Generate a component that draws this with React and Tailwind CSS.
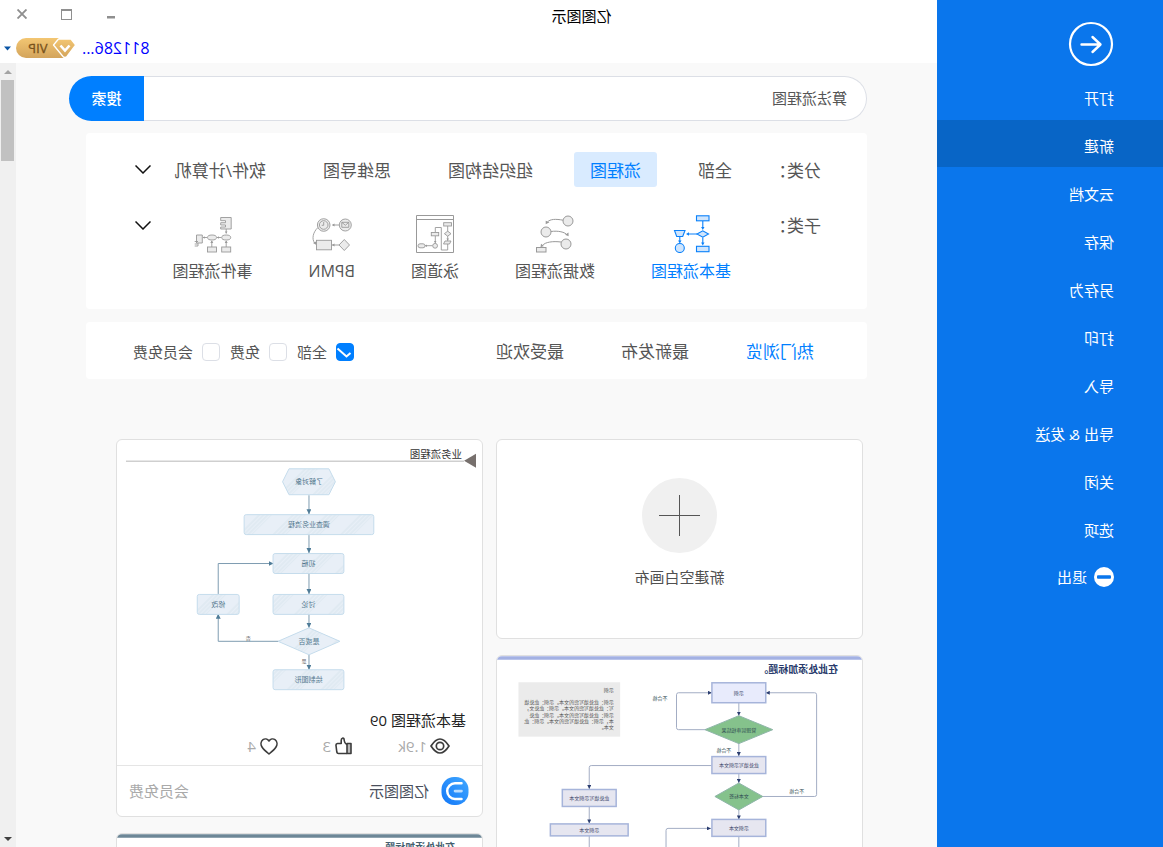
import React from "react";

const MENU = ["打开", "新建", "云文档", "保存", "另存为", "打印", "导入", "导出 & 发送", "关闭", "选项"];
const CATEGORIES = ["全部", "流程图", "组织结构图", "思维导图", "软件/计算机"];
const SORTS = ["热门浏览", "最新发布", "最受欢迎"];
const FEES = ["全部", "免费", "会员免费"];

function Sidebar() {
  return (
    <aside className="flex w-[226px] shrink-0 flex-col bg-[#0a76ec] text-[15px] leading-5 text-white">
      <button type="button" aria-label="返回" className="mt-[21px] ml-[49px] size-[46px]">
        <svg viewBox="0 0 46 46" className="size-full" fill="none" stroke="currentColor" strokeLinecap="round" strokeLinejoin="round">
          <circle cx="23" cy="23" r="21" strokeWidth="2.2" />
          <path d="M32.5 23.5H14M21.5 16l-8 7.5 8 7.5" strokeWidth="2.4" />
        </svg>
      </button>
      <nav className="mt-[5px] flex flex-col gap-px">
        {MENU.map((name) => (
          <a
            key={name}
            href="#"
            className={
              name === "新建"
                ? "flex h-[47px] items-center bg-[#0865c6] pt-1 pl-[49px]"
                : "flex h-[47px] items-center pt-1 pl-[49px]"
            }
          >
            {name}
          </a>
        ))}
        <a href="#" className="flex h-[47px] items-center gap-[7px] pt-[2px] pl-[49px]">
          <svg viewBox="0 0 20 20" className="size-5">
            <circle cx="10" cy="10" r="10" fill="#fff" />
            <rect x="3" y="8.3" width="14" height="3.4" rx="1" fill="#0a76ec" />
          </svg>
          退出
        </a>
      </nav>
    </aside>
  );
}

function VipBadge() {
  return (
    <span className="flex h-5 w-[60px] items-center">
      <svg viewBox="0 0 60 20" className="h-5 w-[60px]">
        <defs>
          <linearGradient id="gold" x1="0" y1="0" x2="0" y2="1">
            <stop offset="0" stopColor="#f3c672" />
            <stop offset="1" stopColor="#d3a45c" />
          </linearGradient>
        </defs>
        <path d="M17 0H50a10 10 0 0 1 0 20H12Z" fill="url(#gold)" />
        <path
          d="M5 1H17.500L22.500 7 13 18.500Q11 20.500 9 18.500L.3 7Z"
          fill="url(#gold)"
          stroke="#fff"
          strokeWidth="1.3"
          strokeLinejoin="round"
        />
        <path d="M6.500 7.500l4.500 5 4.500-5" fill="none" stroke="#fff" strokeWidth="2.6" />
        <text x="28.500" y="15" fontSize="13" fill="#77511a" stroke="#77511a" strokeWidth=".3">
          VIP
        </text>
      </svg>
    </span>
  );
}

function Header() {
  return (
    <header className="h-[63px] shrink-0 bg-white">
      <div className="flex h-8 items-center">
        <h1 className="flex-1 text-center text-[15px] leading-5 text-black">亿图图示</h1>
        <div className="flex w-[226px] shrink-0 items-center justify-end gap-[34px] pr-[17px] pb-1 text-[#8f8f8f]">
          <button type="button" aria-label="最小化" className="size-[10px]">
            <svg viewBox="0 0 10 10" className="size-full">
              <rect x="1" y="7" width="8" height="2.500" fill="currentColor" />
            </svg>
          </button>
          <button type="button" aria-label="最大化" className="size-[11px]">
            <svg viewBox="0 0 11 11" className="size-full" fill="none" stroke="currentColor">
              <rect x=".5" y=".5" width="10" height="10" />
              <path d="M0 1h11" strokeWidth="2" />
            </svg>
          </button>
          <button type="button" aria-label="关闭窗口" className="size-[10px]">
            <svg viewBox="0 0 10 10" className="size-full" stroke="currentColor" strokeWidth="1.900">
              <path d="M.5.500l9 9M9.500.500l-9 9" />
            </svg>
          </button>
        </div>
      </div>
      <div className="flex h-8 items-center justify-end pr-1">
        <a href="#" className="mr-[6px] text-[16px] leading-5 text-[#0000ff]">
          811286...
        </a>
        <VipBadge />
        <button type="button" aria-label="账户菜单" className="ml-[5px] h-[5px] w-[7px]">
          <svg viewBox="0 0 7 4" className="size-full">
            <path d="M0 0h7L3.500 4z" fill="#0a55a5" />
          </svg>
        </button>
      </div>
    </header>
  );
}

function Scrollbar() {
  return (
    <div className="flex w-4 shrink-0 flex-col items-center bg-[#f0f0f0]">
      <div className="flex h-[17px] items-center">
        <svg viewBox="0 0 8 4" className="h-1 w-2">
          <path d="M0 4h8L4 0z" fill="#a3a3a3" />
        </svg>
      </div>
      <div className="h-[81px] w-[13px] bg-[#c1c1c1]" />
      <div className="flex-1" />
      <div className="flex h-[17px] items-center">
        <svg viewBox="0 0 8 4" className="h-1 w-2">
          <path d="M0 0h8L4 4z" fill="#404040" />
        </svg>
      </div>
    </div>
  );
}

function BasicIcon() {
  return (
    <svg viewBox="0 0 38 38" className="size-[38px]" fill="#cfe5fd" stroke="#0a80fa" strokeWidth="1.100">
      <rect x="1" y=".8" width="12.500" height="5" />
      <path d="M7.200 6v7M7.200 22.500V28M13 19h9M30.200 22v4" />
      <path d="M5.500 12h3.400L7.200 15zM5.500 27.500h3.400L7.200 30.500zM21 17.300v3.400L24 19zM28.500 25.500h3.400l-1.700 3z" fill="#0a80fa" stroke="none" />
      <path d="M1.500 19l5.700-3.200L13 19l-5.800 3.200zM25 15.500h10.500l-2.200 6h-6z" />
      <rect x="1" y="31.300" width="12.500" height="5.400" />
      <circle cx="30.200" cy="33" r="4.500" />
    </svg>
  );
}

function DataIcon() {
  return (
    <svg viewBox="0 0 38 38" className="size-[38px]" fill="#ebebeb" stroke="#999" strokeWidth="1">
      <circle cx="6" cy="6" r="5" />
      <circle cx="28" cy="17" r="5" />
      <circle cx="8" cy="29" r="5" />
      <rect x="28" y="32.500" width="9.500" height="4.500" />
      <path d="M11 5.200C18 3.800 24 4 26.500 7M23 16.500C16 15.500 9 17 7 20M13 27C21 26 29 27 31.500 30.500" fill="none" />
      <path d="M24.500 7.300l3.800-1.500v3.500zM5.500 17.500l3.400 2.200-3.500 1.500zM30 31l3-2.300.5 3.500z" fill="#999" stroke="none" />
    </svg>
  );
}

function SwimIcon() {
  return (
    <svg viewBox="0 0 38 38" className="size-[38px]" fill="#ebebeb" stroke="#999" strokeWidth=".9">
      <path d="M.5.500h37v37H.5zM.5 4.500h37" fill="none" strokeWidth="1" />
      <path d="M6.300 11v15M6.300 29v6h6.400V12.500h6V17M18.700 21v7M21.500 30.700H29" fill="none" />
      <rect x="2.500" y="7.700" width="7.800" height="3.300" />
      <path d="M3 18.700l3.300-2.500 3.300 2.500-3.300 2.500zM3 26h6l1.500 3h-6z" />
      <rect x="15.300" y="17.500" width="7.400" height="3.300" />
      <circle cx="18.900" cy="30.800" r="2.400" />
      <rect x="29" y="28.800" width="7" height="4" rx="2" />
      <path d="M5 23.500h2.600l-1.300 2zM17.500 26h2.600l-1.300 2zM27 29.500v2.600l2-1.300z" fill="#999" stroke="none" />
    </svg>
  );
}

function BpmnIcon() {
  return (
    <svg viewBox="0 0 40 38" className="h-[38px] w-10" fill="#ebebeb" stroke="#999" strokeWidth=".9">
      <circle cx="6.700" cy="10" r="6" />
      <path d="M3.200 7.300h7v5h-7zM3.200 7.300l3.500 3 3.500-3" />
      <circle cx="28.300" cy="10" r="6.300" />
      <circle cx="28.300" cy="10" r="4.300" />
      <path d="M28.300 7v3.300h2M13 10h6.500M13 30h7M34 12.500C39 17 40.500 24 37.300 28" fill="none" />
      <path d="M2.500 30l5.200-5.500 5.300 5.500-5.300 5.500z" />
      <rect x="20.500" y="25.300" width="15" height="9.500" />
      <path d="M17.500 8.500v3l2.500-1.500zM17.500 28.500v3L20 30zM36 26.500l3 1.500-3 1.800z" fill="#999" stroke="none" />
    </svg>
  );
}

function EventIcon() {
  return (
    <svg viewBox="0 0 38 38" className="size-[38px]" fill="#ebebeb" stroke="#999" strokeWidth=".9">
      <path d="M.800 2.500h10.500v3.200H6.500v2h4.800v2.300H6.500v2h4.800v2H.800z" />
      <path d="M5.800 14v4.500M10.500 22.500H15M25 22.500h4M5.800 32v-6M20.200 32v-6" fill="none" />
      <ellipse cx="5.800" cy="22.500" rx="4.500" ry="2.500" />
      <ellipse cx="20" cy="22.500" rx="4.500" ry="2.500" />
      <rect x="1.300" y="32" width="9" height="5" />
      <rect x="15.500" y="32" width="9" height="5" />
      <path d="M29.700 20h5.800v8h-5.800z" />
      <path d="M34 26.500h3.300M34.500 29h2.800M34 31h3.300M34 28v3" fill="none" />
      <path d="M4.500 16.500h2.600l-1.300 2zM13 21.200v2.600l2-1.300zM27.300 21.200v2.600l2-1.300zM4.300 28h3l-1.500-2.500zM18.700 28h3l-1.500-2.500z" fill="#999" stroke="none" />
    </svg>
  );
}

const SUBTYPES = [
  { name: "基本流程图", Icon: BasicIcon },
  { name: "数据流程图", Icon: DataIcon },
  { name: "泳道图", Icon: SwimIcon },
  { name: "BPMN", Icon: BpmnIcon },
  { name: "事件流程图", Icon: EventIcon },
];

function Expand({ label }) {
  return (
    <button type="button" aria-label={label} className="absolute right-[49px] h-[9px] w-4">
      <svg viewBox="0 0 16 9" className="size-full" fill="none" stroke="#111" strokeWidth="1.500">
        <path d="M.5.500L8 8 15.500.500" />
      </svg>
    </button>
  );
}

function Filters() {
  return (
    <section className="mt-3 mr-[17px] h-44 rounded-[4px] bg-white pt-[19px] text-[#555]">
      <div className="relative flex h-[35px] items-center pl-[46px] text-[17px] leading-6">
        <span className="w-[73px] shrink-0 pt-[2px]">分类：</span>
        <div className="flex shrink-0 gap-[25px]">
          {CATEGORIES.map((name) => (
            <button
              key={name}
              type="button"
              className={
                name === "流程图"
                  ? "h-[35px] rounded-[3px] bg-[#d9ebff] px-4 pt-[2px] text-[#007fff]"
                  : "h-[35px] px-4 pt-[2px]"
              }
            >
              {name}
            </button>
          ))}
        </div>
        <Expand label="展开分类" />
      </div>
      <div className="relative mt-7 flex items-start pl-[46px]">
        <span className="-mt-px w-[90px] shrink-0 text-[17px] leading-6">子类：</span>
        <div className="flex shrink-0 gap-14">
          {SUBTYPES.map(({ name, Icon }, i) => (
            <button
              key={name}
              type="button"
              className={
                i === 0
                  ? "flex flex-col items-center gap-[6px] text-[16px] leading-6 text-[#007fff]"
                  : "flex flex-col items-center gap-[6px] text-[16px] leading-6"
              }
            >
              <Icon />
              {name}
            </button>
          ))}
        </div>
        <div className="flex h-5 items-center">
          <Expand label="展开子类" />
        </div>
      </div>
    </section>
  );
}

function SortBar() {
  return (
    <section className="mt-[13px] mr-[17px] flex h-[57px] items-center justify-between rounded-[4px] bg-white pt-[2px] pr-[47px] pl-[53px] text-[#555]">
      <div className="flex gap-[57px] text-[17px] leading-6">
        {SORTS.map((name, i) => (
          <button key={name} type="button" className={i === 0 ? "text-[#007fff]" : ""}>
            {name}
          </button>
        ))}
      </div>
      <div className="flex gap-[10px] text-[15px] leading-5">
        {FEES.map((name, i) => (
          <label key={name} className="flex items-center gap-[9px]">
            <span className="grid size-[18px]">
              <input
                type="checkbox"
                defaultChecked={i === 0}
                className="peer col-start-1 row-start-1 size-[18px] appearance-none rounded-[4px] border border-[#dcdfe6] bg-white checked:border-[#007fff] checked:bg-[#007fff]"
              />
              <svg
                viewBox="0 0 18 18"
                className="pointer-events-none invisible col-start-1 row-start-1 size-[18px] peer-checked:visible"
                fill="none"
                stroke="#fff"
                strokeWidth="2"
              >
                <path d="M3.500 10L7.500 13.500 16.500 5.500" />
              </svg>
            </span>
            {name}
          </label>
        ))}
      </div>
    </section>
  );
}

function Step({ x, y, w, h = 20, label }) {
  return (
    <g>
      <rect x={x} y={y} width={w} height={h} rx="2" fill="url(#hatch)" stroke="#c5dcec" />
      <text x={x + w / 2} y={y + h / 2 + 2.500} fontSize="7" textAnchor="middle" fill="#54788f">
        {label}
      </text>
    </g>
  );
}

function BusinessFlow() {
  return (
    <svg viewBox="0 0 366 264" className="block h-[264px] w-full">
      <defs>
        <pattern id="hatch" width="24" height="24" patternUnits="userSpaceOnUse" patternTransform="rotate(-45)">
          <rect width="24" height="24" fill="#e8eff7" />
          <path d="M0 0v24M3 0v24M6 0v24M9 0v24" stroke="#d9e5ee" strokeWidth="1" />
        </pattern>
        <marker id="tipBlue" viewBox="0 0 6 6" refX="6" refY="3" markerWidth="5" markerHeight="5" orient="auto" markerUnits="userSpaceOnUse">
          <path d="M0 0l6 3-6 3z" fill="#4f7c98" />
        </marker>
      </defs>
      <path d="M18 20.500l-12-7v14z" fill="#77706d" />
      <path d="M18 21h339" stroke="#cfcfcf" strokeWidth="1.500" />
      <text x="20" y="18" fontSize="10.500" fill="#333">
        业务流程图
      </text>
      <g fill="none" stroke="#7d9cb1">
        <path d="M173.500 55v19" markerEnd="url(#tipBlue)" />
        <path d="M173.500 95v18" markerEnd="url(#tipBlue)" />
        <path d="M173.500 134v20" markerEnd="url(#tipBlue)" />
        <path d="M173.500 174v14" markerEnd="url(#tipBlue)" />
        <path d="M173.500 215v15" markerEnd="url(#tipBlue)" />
        <path d="M204 201.500h60.500V174" markerEnd="url(#tipBlue)" />
        <path d="M264.500 154v-30.500H209" markerEnd="url(#tipBlue)" />
      </g>
      <path d="M147 41.500l6.500-13h40l6.500 13-6.500 13h-40z" fill="url(#hatch)" stroke="#c5dcec" />
      <text x="173.500" y="44" fontSize="7" textAnchor="middle" fill="#54788f">
        了解对象
      </text>
      <Step x={108.5} y={74.5} w={130} label="调查业务流程" />
      <Step x={138.5} y={113.5} w={71} label="初稿" />
      <Step x={138.5} y={154.5} w={71} label="讨论" />
      <Step x={243.5} y={154.5} w={42} label="修改" />
      <path d="M142.500 201.500l31-13.500 31 13.500-31 13.500z" fill="url(#hatch)" stroke="#c5dcec" />
      <text x="173.500" y="204" fontSize="7" textAnchor="middle" fill="#54788f">
        是或否
      </text>
      <text x="176" y="223" fontSize="5" fill="#666">
        是
      </text>
      <text x="232" y="200" fontSize="5" fill="#666">
        否
      </text>
      <Step x={138.5} y={230} w={71} label="绘制图形" />
    </svg>
  );
}

function Node({ x, y, w, h, label, fill = "#e6e6f0" }) {
  return (
    <g>
      <rect x={x} y={y} width={w} height={h} fill={fill} stroke="#a6b4da" strokeWidth="1.500" />
      <text x={x + w / 2} y={y + h / 2 + 2} fontSize="5" textAnchor="middle" fill="#3b4568">
        {label}
      </text>
    </g>
  );
}

function ReviewFlow() {
  const note = [
    "示例：此处填写您的文本。示例：此处填",
    "写：此处填写您的文本。示例：此处文，",
    "示例：此处填写您的文本。示例：此处",
    "本，示例：此处填写您的文本。示例：此",
    "文本。",
  ];
  return (
    <svg viewBox="0 0 366 264" className="block h-[264px] w-full">
      <defs>
        <marker id="tipNavy" viewBox="0 0 6 6" refX="6" refY="3" markerWidth="4" markerHeight="4" orient="auto" markerUnits="userSpaceOnUse">
          <path d="M0 0l6 3-6 3z" fill="#2c3e70" />
        </marker>
      </defs>
      <path d="M0 0h366v3.500H0z" fill="#a3b1e3" />
      <text x="24" y="17" fontSize="10" fontWeight="700" fill="#283a6b">
        在此处添加标题。
      </text>
      <rect x="242.500" y="26" width="102" height="54.500" fill="#ebebeb" />
      <g fontSize="5" fill="#555">
        <text x="249" y="36">示例</text>
        {note.map((line, i) => (
          <text key={line} x="249" y={48 + i * 6.2}>
            {line}
          </text>
        ))}
      </g>
      <g fill="none" stroke="#a3adc4">
        <path d="M123.500 46v13.500" markerEnd="url(#tipNavy)" />
        <path d="M123.500 87v13" markerEnd="url(#tipNavy)" />
        <path d="M123.500 117v10" markerEnd="url(#tipNavy)" />
        <path d="M123.500 154v9.500" markerEnd="url(#tipNavy)" />
        <path d="M123.500 181v30" />
        <path d="M100 140.500H47.500q-2 0-2-2v-100q0-2 2-2h49" markerEnd="url(#tipNavy)" />
        <path d="M157 73.500h27q2 0 2-2v-33q0-2-2-2h-33.500" markerEnd="url(#tipNavy)" />
        <path d="M151 109.500h120.500q2 0 2 2V133" markerEnd="url(#tipNavy)" />
        <path d="M273.500 151v16.500" markerEnd="url(#tipNavy)" />
        <path d="M273.500 180v40" />
        <path d="M196.500 220v-45.500q0-2-2-2h-43" markerEnd="url(#tipNavy)" />
      </g>
      <Node x={96.5} y={26.500} w={54} h={20} label="示例" fill="#e8ebfc" />
      <Node x={96.5} y={100.5} w={54} h={17} label="此处填写示例文本" />
      <Node x={96.5} y={163.5} w={54} h={17} label="示例文本" />
      <Node x={246.5} y={133.5} w={54} h={17} label="此处填写示例文本" />
      <Node x={234.5} y={168} w={78} h={12} label="示例文本" />
      <path d="M89.500 73.500l34-14 34 14-34 14zM99.500 140.500l24-13.500 24 13.500-24 13.500z" fill="#85c28c" stroke="#8fb5a9" />
      <g fontSize="5" fill="#2f4a52">
        <text x="123.500" y="75.500" textAnchor="middle">管理层审核结果</text>
        <text x="123.500" y="142.500" textAnchor="middle">文本标签</text>
        <text x="195" y="44">不合格</text>
        <text x="131" y="96">不合格</text>
        <text x="58" y="137">不合格</text>
      </g>
    </svg>
  );
}

function EyeIcon() {
  return (
    <svg viewBox="0 0 20 16" className="h-4 w-5" fill="none" stroke="#3c3c3c" strokeWidth="1.700">
      <path d="M1 8q9-14 18 0-9 14-18 0z" strokeLinejoin="round" />
      <circle cx="10" cy="8" r="3.700" />
    </svg>
  );
}

function ThumbIcon() {
  return (
    <svg viewBox="0 0 17 18" className="h-[18px] w-[17px]" fill="none" stroke="#3c3c3c" strokeWidth="1.600" strokeLinejoin="round">
      <rect x="1" y="6.500" width="4" height="10" fill="#bbb" />
      <path d="M5 7.500c2-.8 2.800-3 3-5.500.3-1.500 2.800-1.300 2.800 1.500v3h3.700q1.700.200 1.500 2l-.800 6.500q-.3 1.500-1.700 1.500H5" />
    </svg>
  );
}

function HeartIcon() {
  return (
    <svg viewBox="0 0 18 17" className="h-[17px] w-[18px]" fill="none" stroke="#3c3c3c" strokeWidth="1.600" strokeLinejoin="round">
      <path d="M9 3C7.500.800 4.800.500 3 1.700.700 3.300.500 6.500 2 9c1.500 2.500 4.500 5 7 7 2.500-2 5.500-4.500 7-7 1.500-2.500 1.300-5.700-1-7.300C13.200.500 10.500.800 9 3z" />
    </svg>
  );
}

function BrandIcon() {
  return (
    <svg viewBox="0 0 28 28" className="size-7">
      <defs>
        <linearGradient id="brand" x1="0" y1="0" x2="1" y2="1">
          <stop offset="0" stopColor="#41a8ff" />
          <stop offset="1" stopColor="#1277f8" />
        </linearGradient>
      </defs>
      <rect x=".5" width="27" height="28" rx="12.500" fill="url(#brand)" />
      <path d="M7.500 6.300H14a7.800 7.800 0 0 1 0 15.600H7.500" fill="none" stroke="#fff" strokeWidth="2.500" strokeLinecap="round" />
      <path d="M7.500 14.100h6.500" stroke="#b9dcff" strokeWidth="2.600" strokeLinecap="round" />
    </svg>
  );
}

function Templates() {
  const card = "overflow-hidden rounded-[6px] border border-[#e0e0e0] bg-white";
  return (
    <section className="mt-[60px] mr-[47px] ml-1 grid grid-cols-2 items-start gap-[13px]">
      <div className="flex flex-col gap-4">
        <button type="button" className={card + " flex h-[200px] flex-col items-center pt-[38px] text-[15px] leading-5 text-[#505050]"}>
          <svg viewBox="0 0 75 75" className="mb-[14px] size-[75px]">
            <circle cx="37.500" cy="37.500" r="37.500" fill="#f0f0f0" />
            <path d="M37.500 17v41M17 37.500h41" stroke="#555" strokeWidth="1" />
          </svg>
          新建空白画布
        </button>
        <article className={card}>
          <ReviewFlow />
        </article>
      </div>
      <div className="flex flex-col gap-4">
        <article className={card}>
          <BusinessFlow />
          <h2 className="mt-[6px] pl-4 text-[15px] leading-5 text-[#222]">基本流程图 09</h2>
          <div className="mt-[6px] flex h-5 pl-8 text-[15px] leading-5 text-[#aaa]">
            <span className="flex w-[98px] items-center gap-[3px]">
              <EyeIcon />
              1.9k
            </span>
            <span className="flex w-[74px] items-center gap-1">
              <ThumbIcon />
              3
            </span>
            <span className="flex items-center gap-1">
              <HeartIcon />
              4
            </span>
          </div>
          <div className="mt-[9px] flex h-[51px] items-center border-t border-[#e5e5e5] pr-3 pl-[13px] text-[15px] leading-5">
            <BrandIcon />
            <span className="ml-3 flex-1 text-[#4a4f5c]">亿图图示</span>
            <span className="text-[#aaa]">会员免费</span>
          </div>
        </article>
        <article className={card}>
          <svg viewBox="0 0 366 264" className="block h-[264px] w-full">
            <path d="M0 0h366v3.500H0z" fill="#6d8797" />
            <text x="27" y="17" fontSize="10" fontWeight="700" fill="#45606f">
              在此处添加标题
            </text>
          </svg>
        </article>
      </div>
    </section>
  );
}

export default function App() {
  return (
    <div className="flex h-screen -scale-x-100 overflow-hidden bg-white font-['Open_Sans','Noto_Sans_CJK_SC',sans-serif]">
      <Sidebar />
      <div className="flex min-w-0 flex-1 flex-col">
        <Header />
        <div className="flex min-h-0 flex-1 bg-[#f9f9f9]">
          <main className="min-w-0 flex-1 overflow-hidden pt-[13px] pr-[53px] pl-[70px]">
            <form className="flex h-[45px]" onSubmit={(e) => e.preventDefault()}>
              <input
                type="search"
                aria-label="搜索模板"
                defaultValue="算法流程图"
                className="min-w-0 flex-1 appearance-none rounded-l-full border border-r-0 border-[#dcdfe6] bg-white pb-[2px] pl-[19px] text-[15px] leading-5 text-[#555] outline-none"
              />
              <button type="submit" className="w-[75px] rounded-r-full bg-[#007fff] pb-[2px] text-[15px] leading-5 font-medium text-white">
                搜索
              </button>
            </form>
            <Filters />
            <SortBar />
            <Templates />
          </main>
          <Scrollbar />
        </div>
      </div>
    </div>
  );
}
